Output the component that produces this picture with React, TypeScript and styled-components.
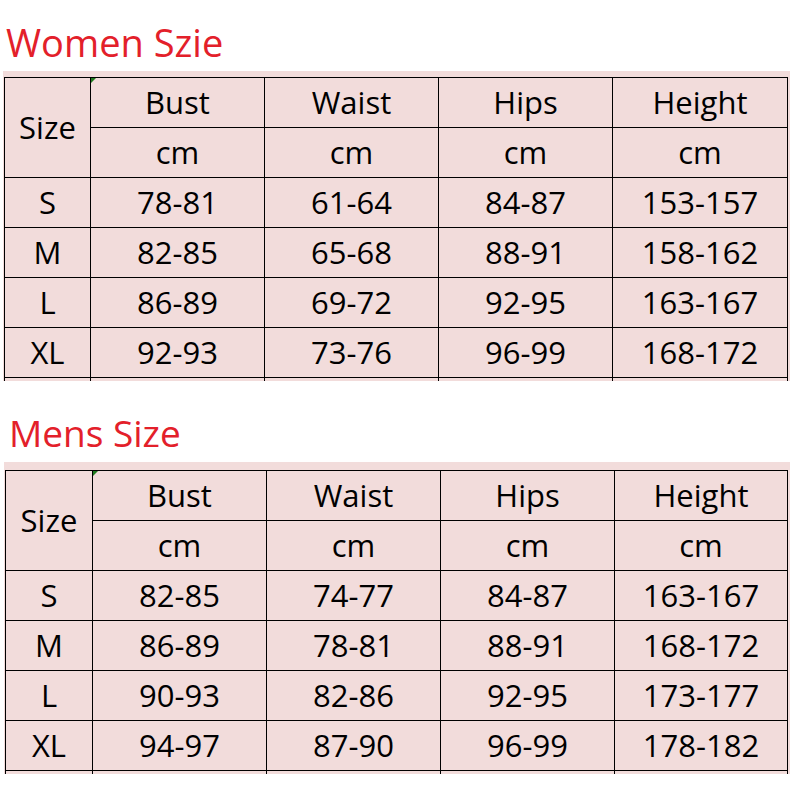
import React from "react";
import styled, { createGlobalStyle } from "styled-components";

const Global = createGlobalStyle`
  html, body { margin: 0; padding: 0; background: #ffffff; }
  body { font-family: "Open Sans", "Noto Sans", sans-serif; }
`;

const Page = styled.div`
  display: flex;
  flex-direction: column;
  width: 800px;
  padding-top: 24px;
  box-sizing: border-box;
`;

const Section = styled.section<{ $gapTop: number }>`
  display: flex;
  flex-direction: column;
  margin-top: ${(p) => p.$gapTop}px;
`;

const Title = styled.h2<{ $indent: number; $below: number; $size: number }>`
  margin: 0 0 ${(p) => p.$below}px ${(p) => p.$indent}px;
  font-family: "Open Sans", sans-serif;
  font-weight: 400;
  font-size: ${(p) => p.$size}px;
  line-height: 37px;
  color: #e3202a;
`;

const Sheet = styled.div<{ $left: number; $top: number }>`
  align-self: flex-start;
  margin-left: ${(p) => p.$left}px;
  padding: ${(p) => p.$top}px 2px 0 1px;
  background: #f2dcdb;
`;

const Grid = styled.div<{ $cols: string }>`
  display: grid;
  grid-template-columns: ${(p) => p.$cols};
  grid-template-rows: repeat(6, 50px) 3px;
  border-left: 1px solid #000;
  border-top: 1px solid #000;
`;

const Cell = styled.div<{ $span?: number }>`
  position: relative;
  box-sizing: border-box;
  display: flex;
  align-items: center;
  justify-content: center;
  padding-bottom: 2px;
  border-right: 1px solid #000;
  border-bottom: 1px solid #000;
  grid-row: span ${(p) => p.$span ?? 1};
  font-family: "Open Sans", sans-serif;
  font-size: 31px;
  color: #000;
  white-space: nowrap;
`;

const Stub = styled.div`
  box-sizing: border-box;
  border-right: 1px solid #000;
`;

const Flag = styled.span`
  position: absolute;
  left: 0;
  top: 0;
  width: 0;
  height: 0;
  border-top: 5px solid #1f7a1f;
  border-right: 5px solid transparent;
`;

type Row = [string, string, string, string, string];

const heads = ["Bust", "Waist", "Hips", "Height"];

const women: Row[] = [
  ["S", "78-81", "61-64", "84-87", "153-157"],
  ["M", "82-85", "65-68", "88-91", "158-162"],
  ["L", "86-89", "69-72", "92-95", "163-167"],
  ["XL", "92-93", "73-76", "96-99", "168-172"],
];

const men: Row[] = [
  ["S", "82-85", "74-77", "84-87", "163-167"],
  ["M", "86-89", "78-81", "88-91", "168-172"],
  ["L", "90-93", "82-86", "92-95", "173-177"],
  ["XL", "94-97", "87-90", "96-99", "178-182"],
];

function SizeTable({ rows, cols }: { rows: Row[]; cols: string }) {
  return (
    <Grid $cols={cols}>
      <Cell $span={2}>Size</Cell>
      {heads.map((h, i) => (
        <Cell key={h}>
          {i === 0 && <Flag />}
          {h}
        </Cell>
      ))}
      {heads.map((h) => (
        <Cell key={h + "-cm"}>cm</Cell>
      ))}
      {rows.map((r) =>
        r.map((v, i) => <Cell key={r[0] + i}>{v}</Cell>)
      )}
      {[0, 1, 2, 3, 4].map((i) => (
        <Stub key={"s" + i} />
      ))}
    </Grid>
  );
}

export default function App() {
  return (
    <>
      <Global />
      <Page>
        <Section $gapTop={0}>
          <Title $indent={6} $below={10} $size={38}>Women Szie</Title>
          <Sheet $left={3} $top={6}>
            <SizeTable rows={women} cols="86px 174px 174px 174px 175px" />
          </Sheet>
        </Section>
        <Section $gapTop={33}>
          <Title $indent={9} $below={11} $size={37}>Mens Size</Title>
          <Sheet $left={4} $top={8}>
            <SizeTable rows={men} cols="87px 174px 174px 174px 173px" />
          </Sheet>
        </Section>
      </Page>
    </>
  );
}
